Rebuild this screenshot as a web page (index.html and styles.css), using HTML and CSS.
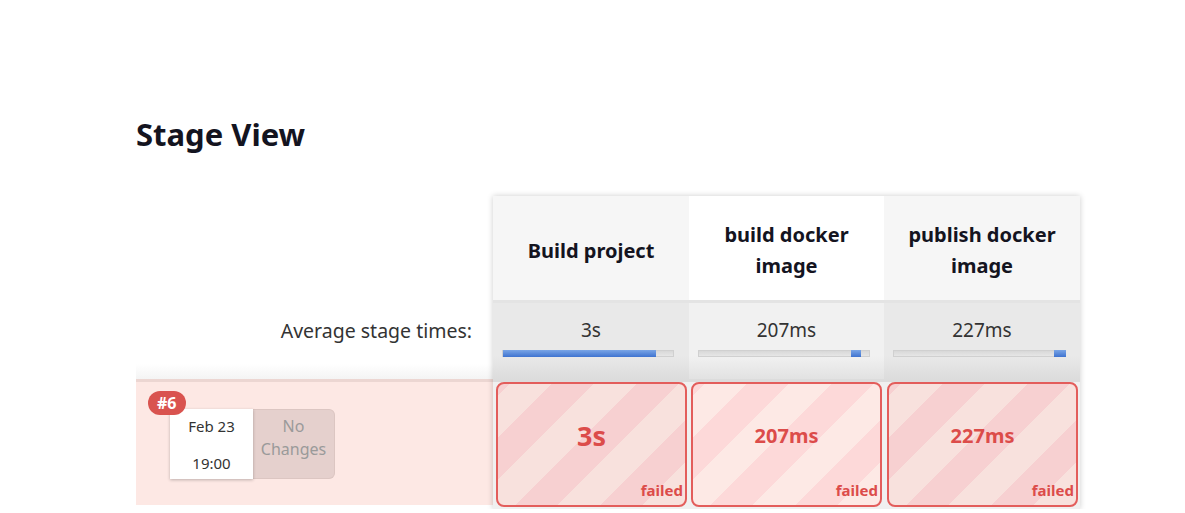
FILE: index.html
```html
<!DOCTYPE html>
<html>
<head>
<meta charset="utf-8">
<link rel="stylesheet" href="styles.css">
</head>
<body>
<div class="page">
  <h1 class="title">Stage View</h1>
  <div class="stage-table">
    <div class="labels">
      <div class="label-head"></div>
      <div class="label-avg">Average stage times:</div>
      <div class="label-build">
        <div class="build-info">
          <span class="badge">#6</span>
          <div class="date-box">
            <div>Feb 23</div>
            <div>19:00</div>
          </div>
          <div class="changes">No<br>Changes</div>
        </div>
      </div>
    </div>
    <div class="stages">
      <div class="col col-a">
        <div class="head"><span>Build project</span></div>
        <div class="avg">
          <div class="avg-time">3s</div>
          <div class="bar"><div class="fill" style="left:0;width:153px"></div></div>
        </div>
        <div class="build">
          <div class="failed-box"><span class="dur big">3s</span><span class="status">failed</span></div>
        </div>
      </div>
      <div class="col col-b">
        <div class="head"><span>build docker<br>image</span></div>
        <div class="avg">
          <div class="avg-time">207ms</div>
          <div class="bar"><div class="fill" style="left:152px;width:10px"></div></div>
        </div>
        <div class="build">
          <div class="failed-box"><span class="dur">207ms</span><span class="status">failed</span></div>
        </div>
      </div>
      <div class="col col-a">
        <div class="head"><span>publish docker<br>image</span></div>
        <div class="avg">
          <div class="avg-time">227ms</div>
          <div class="bar"><div class="fill" style="left:160px;width:12px"></div></div>
        </div>
        <div class="build">
          <div class="failed-box"><span class="dur">227ms</span><span class="status">failed</span></div>
        </div>
      </div>
    </div>
  </div>
</div>
</body>
</html>
```
FILE: styles.css
```css
html, body {
  margin: 0;
  padding: 0;
  background: #fff;
}
body {
  font-family: "Noto Sans", "Open Sans", sans-serif;
  color: #1b1b24;
}
.page {
  padding: 112px 0 0 136px;
}
.title {
  margin: 0;
  font-size: 31px;
  line-height: 44px;
  font-weight: 700;
  color: #14141f;
}
.stage-table {
  display: flex;
  margin-top: 40px;
}
.labels {
  width: 357px;
  display: flex;
  flex-direction: column;
}
.label-head {
  height: 107px;
}
.label-avg {
  height: 76px;
  box-sizing: border-box;
  padding: 14px 21px 0 0;
  text-align: right;
  font-size: 19.5px;
  color: #333;
  background: linear-gradient(#fff 80%, #f4f4f4);
}
.label-build {
  height: 126px;
  box-sizing: border-box;
  background: #fde8e4;
  border-top: 3px solid #ecd6d2;
  padding: 27px 0 0 34px;
}
.build-info {
  position: relative;
  display: flex;
}
.badge {
  position: absolute;
  left: -22px;
  top: -18px;
  background: #d9534f;
  color: #fff;
  font-weight: 700;
  font-size: 16px;
  line-height: 24px;
  padding: 0 9px;
  border-radius: 12px;
  z-index: 2;
}
.date-box {
  width: 83px;
  height: 70px;
  background: #fff;
  box-shadow: 0 1px 3px rgba(0,0,0,0.25);
  text-align: center;
  font-size: 15px;
  color: #333;
  display: flex;
  flex-direction: column;
  justify-content: space-between;
  padding: 7px 0 6px;
  box-sizing: border-box;
  z-index: 1;
}
.changes {
  width: 82px;
  height: 70px;
  box-sizing: border-box;
  background: #e5d0cd;
  border: 1px solid #dcc6c2;
  border-left: 0;
  border-radius: 0 6px 6px 0;
  color: #9a9a9a;
  font-size: 16px;
  line-height: 23px;
  text-align: center;
  padding-top: 5px;
}
.stages {
  display: flex;
  box-shadow: 0 0 6px rgba(0,0,0,0.2);
}
.col {
  width: 196px;
  display: flex;
  flex-direction: column;
}
.col-b {
  width: 195px;
}
.head {
  display: flex;
  align-items: center;
  justify-content: center;
  text-align: center;
  font-weight: 700;
  font-size: 20px;
  line-height: 31px;
  color: #14141f;
  padding-top: 4px;
  height: 100px;
  border-bottom: 3px solid #e4e4e4;
}
.col-a .head {
  background: #f6f6f6;
}
.col-b .head {
  background: #fff;
}
.avg {
  height: 76px;
  box-sizing: border-box;
  padding-top: 14px;
  text-align: center;
  position: relative;
}
.col-a .avg {
  background: linear-gradient(#e9e9e9 70%, #dcdcdc);
}
.col-b .avg {
  background: linear-gradient(#f1f1f1 70%, #e2e2e2);
}
.avg-time {
  font-size: 19px;
  line-height: 26px;
  color: #333;
}
.bar {
  position: relative;
  width: 172px;
  height: 7px;
  margin: 7px 0 0 9px;
  background: linear-gradient(#d8d8d8, #e6e6e6);
  border: 1px solid #d0d0d0;
  box-sizing: border-box;
}
.fill {
  position: absolute;
  top: -1px;
  height: 7px;
  background: linear-gradient(#7aa5e6, #3e73d0);
}
.build {
  height: 130px;
  box-sizing: border-box;
  border-top: 3px solid #dcdcdc;
  padding: 0 2px 3px 3px;
  background: #f0f0f0;
}
.col-b .build {
  padding-left: 2px;
}
.failed-box {
  height: 125px;
  box-sizing: border-box;
  border: 2px solid #e35d5b;
  border-radius: 8px;
  position: relative;
  display: flex;
  align-items: center;
  justify-content: center;
  padding-bottom: 18px;
  color: #dc4c4a;
  font-weight: 700;
  background: repeating-linear-gradient(-45deg, #f8e1dd 0 30px, #f7d0d1 30px 60px);
}
.col-b .failed-box {
  background: repeating-linear-gradient(-45deg, #fde9e5 0 30px, #fdd9d9 30px 60px);
}
.dur {
  font-size: 20px;
}
.dur.big {
  font-size: 27px;
}
.status {
  position: absolute;
  right: 2px;
  bottom: 6px;
  font-size: 15px;
  line-height: 18px;
}
```
